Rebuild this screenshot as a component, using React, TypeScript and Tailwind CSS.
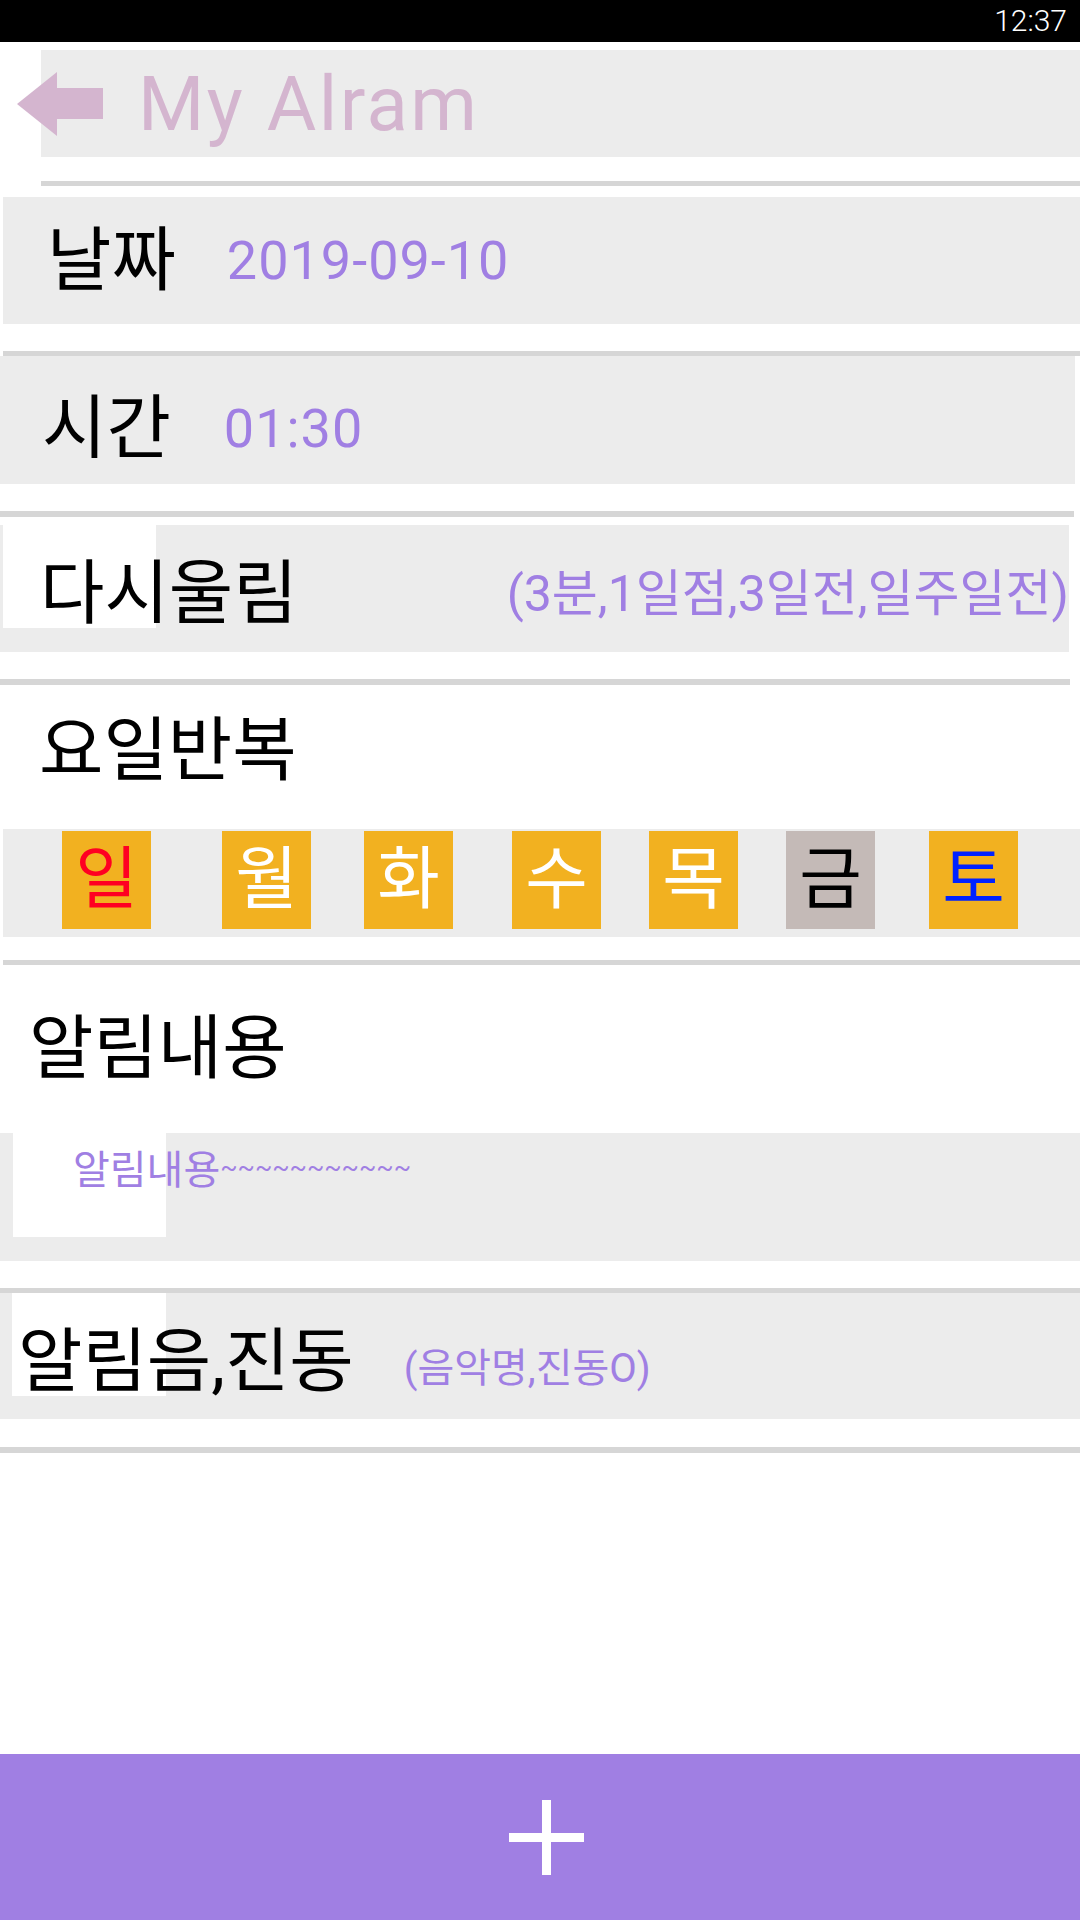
import React from "react";

const days = [
  { ch: "일", ml: "ml-[59px]", box: "bg-[#f2b120]", text: "text-[#ff0022]" },
  { ch: "월", ml: "ml-[71px]", box: "bg-[#f2b120]", text: "text-white" },
  { ch: "화", ml: "ml-[53px]", box: "bg-[#f2b120]", text: "text-white" },
  { ch: "수", ml: "ml-[59px]", box: "bg-[#f2b120]", text: "text-white" },
  { ch: "목", ml: "ml-[48px]", box: "bg-[#f2b120]", text: "text-white" },
  { ch: "금", ml: "ml-[48px]", box: "bg-[#c4bab7]", text: "text-black" },
  { ch: "토", ml: "ml-[54px]", box: "bg-[#f2b120]", text: "text-[#0022ff]" },
];

export default function App() {
  return (
    <div className="w-[1080px] h-[1920px] bg-white flex flex-col overflow-hidden font-[Roboto,'Noto_Sans_CJK_KR',sans-serif]">
      {/* status bar */}
      <div className="h-[42px] shrink-0 bg-black flex items-center justify-end pr-[13px]">
        <span className="text-white text-[30px] font-light leading-none">12:37</span>
      </div>

      {/* header */}
      <div className="mt-[8px] ml-[41px] h-[107px] shrink-0 bg-[#ececec] flex items-center">
        <svg className="-ml-[24px] shrink-0" width="86" height="64" viewBox="0 0 86 64">
          <polygon points="0,32 40,0 40,16 86,16 86,47 40,47 40,64" fill="#d4b5cf" />
        </svg>
        <span className="ml-[35px] text-[76px] leading-none tracking-[2.5px] text-[#d4b5cf]">My Alram</span>
      </div>
      <div className="mt-[24px] ml-[41px] h-[5px] shrink-0 bg-[#d6d6d6]" />

      {/* date */}
      <div className="mt-[11px] ml-[3px] h-[127px] shrink-0 bg-[#ececec] flex items-center pl-[44px]">
        <span className="text-[70px] leading-none text-black">날짜</span>
        <span className="ml-[51px] text-[54px] leading-none tracking-[1px] text-[#a07fe3]">2019-09-10</span>
      </div>
      <div className="mt-[27px] ml-[3px] h-[5px] shrink-0 bg-[#d6d6d6]" />

      {/* time */}
      <div className="w-[1075px] h-[128px] shrink-0 bg-[#ececec] flex items-center pl-[42px] pt-[18px]">
        <span className="text-[70px] leading-none text-black">시간</span>
        <span className="ml-[53px] text-[54px] leading-none tracking-[1px] text-[#a07fe3]">01:30</span>
      </div>
      <div className="mt-[27px] w-[1074px] h-[6px] shrink-0 bg-[#d6d6d6]" />

      {/* snooze */}
      <div className="mt-[8px] w-[1069px] h-[127px] shrink-0 bg-[#ececec] relative flex items-center pl-[40px] pt-[10px]">
        <div className="absolute left-[3px] top-0 w-[153px] h-[103px] bg-white" />
        <span className="relative text-[70px] leading-none text-black">다시울림</span>
        <span className="relative ml-auto text-[50px] leading-none text-[#a07fe3]">(3분,1일점,3일전,일주일전)</span>
      </div>
      <div className="mt-[27px] w-[1070px] h-[6px] shrink-0 bg-[#d6d6d6]" />

      {/* weekday repeat */}
      <div className="h-[144px] shrink-0 flex items-center pl-[39px] pb-[12px]">
        <span className="text-[70px] leading-none text-black">요일반복</span>
      </div>
      <div className="ml-[3px] h-[108px] shrink-0 bg-[#ececec] flex items-start pt-[2px]">
        {days.map((d) => (
          <div
            key={d.ch}
            className={`${d.ml} ${d.box} w-[89px] h-[98px] shrink-0 flex items-center justify-center`}
          >
            <span className={`${d.text} text-[68px] leading-none`}>{d.ch}</span>
          </div>
        ))}
      </div>
      <div className="mt-[23px] ml-[3px] h-[5px] shrink-0 bg-[#d6d6d6]" />

      {/* message */}
      <div className="h-[168px] shrink-0 flex items-center pl-[29px]">
        <span className="text-[70px] leading-none text-black">알림내용</span>
      </div>
      <div className="h-[128px] shrink-0 bg-[#ececec] relative">
        <div className="absolute left-[13px] top-0 w-[153px] h-[104px] bg-white" />
        <div className="relative pl-[73px] pt-[18px] text-[40px] leading-none text-[#a07fe3]">
          알림내용<span className="relative -top-[8px] text-[25.5px]">~~~~~~~~~~~</span>
        </div>
      </div>
      <div className="mt-[27px] h-[5px] shrink-0 bg-[#d6d6d6]" />

      {/* sound */}
      <div className="h-[126px] shrink-0 bg-[#ececec] relative flex items-center pl-[18px] pt-[12px]">
        <div className="absolute left-[12px] top-0 w-[154px] h-[103px] bg-white" />
        <span className="relative text-[70px] leading-none text-black">알림음,진동</span>
        <span className="relative ml-[50px] mt-[14px] text-[40px] leading-none text-[#a07fe3]">(음악명,진동O)</span>
      </div>
      <div className="mt-[28px] h-[6px] shrink-0 bg-[#d6d6d6]" />

      <div className="flex-1" />

      {/* add bar */}
      <div className="h-[166px] shrink-0 bg-[#a07fe3] flex items-center justify-center">
        <svg className="ml-[12px]" width="75" height="75" viewBox="0 0 75 75">
          <rect x="33" y="0" width="9" height="75" fill="#ffffff" />
          <rect x="0" y="33" width="75" height="9" fill="#ffffff" />
        </svg>
      </div>
    </div>
  );
}
